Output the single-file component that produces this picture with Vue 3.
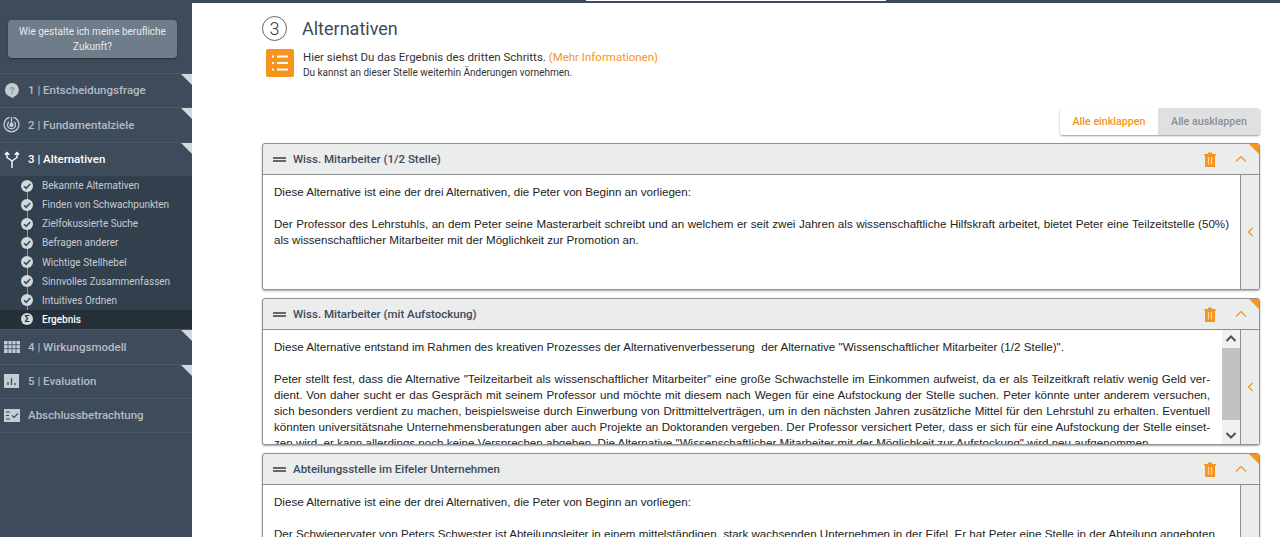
<script setup>
const steps = [
  { label: '1 | Entscheidungsfrage', icon: 'question' },
  { label: '2 | Fundamentalziele', icon: 'target' },
  { label: '3 | Alternativen', icon: 'fork', active: true },
]
const subSteps = [
  'Bekannte Alternativen',
  'Finden von Schwachpunkten',
  'Zielfokussierte Suche',
  'Befragen anderer',
  'Wichtige Stellhebel',
  'Sinnvolles Zusammenfassen',
  'Intuitives Ordnen',
]
const lowerSteps = [
  { label: '4 | Wirkungsmodell', icon: 'grid', tri: true },
  { label: '5 | Evaluation', icon: 'chart', tri: true },
  { label: 'Abschlussbetrachtung', icon: 'check', tri: false },
]
</script>

<template>
  <div class="page">
    <div class="topbar"><div class="notch"></div></div>
    <div class="layout">
      <aside class="sidebar">
        <div class="question-wrap">
          <div class="question">Wie gestalte ich meine berufliche Zukunft?</div>
        </div>
        <nav>
          <div v-for="s in steps" :key="s.label" class="step" :class="{ active: s.active }">
            <span class="step-icon">
              <svg v-if="s.icon === 'question'" width="16" height="17" viewBox="0 0 16 17">
                <path d="M8 1a7 7 0 0 0-7 7c0 3.500 2.500 6.300 6 6.900L9.500 16.500V14.800A7 7 0 0 0 8 1z" fill="#c5ccd3"/>
                <text x="8" y="11.500" text-anchor="middle" font-size="9.500" font-weight="700" font-family="Roboto" fill="#8c97a2">?</text>
              </svg>
              <svg v-if="s.icon === 'target'" width="17" height="17" viewBox="0 0 17 17" fill="none" stroke="#c5ccd3" stroke-width="1.300">
                <path d="M6.500 1.300a7.400 7.400 0 1 0 4 0"/>
                <path d="M6 5.800a4 4 0 1 0 5 0"/>
                <circle cx="8.500" cy="9" r="1.500" fill="#c5ccd3"/>
                <path d="M8.500 1v7"/>
              </svg>
              <svg v-if="s.icon === 'fork'" width="16" height="17" viewBox="0 0 16 17" fill="none" stroke="#fff" stroke-width="1.400">
                <path d="M8 17v-7L3 6.500V2M8 10l5-3.500V2"/>
                <path d="M.8 3.800L3 1.500l2.200 2.300M10.800 3.800L13 1.500l2.200 2.300"/>
              </svg>
            </span>
            <span>{{ s.label }}</span>
            <i class="tri"></i>
          </div>
        </nav>
        <ul class="subs">
          <li v-for="sub in subSteps" :key="sub" class="sub">
            <span class="dot">
              <svg width="10" height="10" viewBox="0 0 10 10" fill="none" stroke="#3d4b5a" stroke-width="1.600"><path d="M2 5.200l2.200 2.200L8.200 3"/></svg>
            </span>
            {{ sub }}
          </li>
          <li class="sub current">
            <span class="dot"><b>Σ</b></span>
            Ergebnis
          </li>
        </ul>
        <nav class="lower">
          <div v-for="s in lowerSteps" :key="s.label" class="step">
            <span class="step-icon">
              <svg v-if="s.icon === 'grid'" width="16" height="12" viewBox="0 0 16 12" fill="#c5ccd3">
                <path d="M0 0h16v12H0z"/>
                <path d="M0 3.700h16M0 7.700h16M4 0v12M8 0v12M12 0v12" stroke="#3d4b5a" stroke-width=".8"/>
              </svg>
              <svg v-if="s.icon === 'chart'" width="15" height="14" viewBox="0 0 15 14">
                <path d="M0 0h15v14H0z" fill="#c5ccd3"/>
                <path d="M4 8v3M7.500 4v7M11 9v2" stroke="#3d4b5a" stroke-width="1.300"/>
              </svg>
              <svg v-if="s.icon === 'check'" width="16" height="13" viewBox="0 0 16 13" fill="none">
                <path d="M0 0h16v13H0z" fill="#c5ccd3"/>
                <path d="M2 3h4M2 6.500h3M2 10h4" stroke="#3d4b5a" stroke-width="1"/>
                <path d="M8 6.500l2 2 4-4" stroke="#3d4b5a" stroke-width="1.200"/>
              </svg>
            </span>
            <span>{{ s.label }}</span>
            <i v-if="s.tri" class="tri"></i>
          </div>
        </nav>
      </aside>

      <main class="content">
        <header class="head">
          <span class="num">3</span>
          <h1>Alternativen</h1>
        </header>
        <div class="intro">
          <span class="intro-icon">
            <svg width="20" height="20" viewBox="0 0 20 20" fill="none" stroke="#fff" stroke-width="2">
              <path d="M7 3.500h11M7 10h11M7 16.500h11"/>
              <path d="M2 3.500h2M2 10h2M2 16.500h2"/>
            </svg>
          </span>
          <div class="intro-text">
            <p class="intro-main">Hier siehst Du das Ergebnis des dritten Schritts. <a>(Mehr Informationen)</a></p>
            <p class="intro-sub">Du kannst an dieser Stelle weiterhin Änderungen vornehmen.</p>
          </div>
        </div>

        <div class="toolbar">
          <div class="btn-group">
            <button class="on">Alle einklappen</button>
            <button class="off">Alle ausklappen</button>
          </div>
        </div>

        <section class="card">
          <div class="card-head">
            <span class="grip"></span>
            <h2>Wiss. Mitarbeiter (1/2 Stelle)</h2>
            <svg class="trash" width="12" height="15" viewBox="0 0 12 15"><path d="M0 2h4V.500h4V2h4v1.500h-1V15H1V3.500H0z" fill="#f7941d"/><path d="M4.500 5v7.500M7.500 5v7.500" stroke="#fbd9ae" stroke-width="1.200"/></svg>
            <svg class="chev" width="12" height="8" viewBox="0 0 12 8" fill="none" stroke="#f7941d" stroke-width="1.200"><path d="M1 6.500l5-5 5 5"/></svg>
          </div>
          <div class="card-body">
            <div class="text">
              <p>Diese Alternative ist eine der drei Alternativen, die Peter von Beginn an vorliegen:</p>
              <br>
              <p>Der Professor des Lehrstuhls, an dem Peter seine Masterarbeit schreibt und an welchem er seit zwei Jahren als wissenschaftliche Hilfskraft arbeitet, bietet Peter eine Teilzeitstelle (50%) als wissenschaftlicher Mitarbeiter mit der Möglichkeit zur Promotion an.</p>
            </div>
            <div class="rail"><svg width="7" height="10" viewBox="0 0 7 10" fill="none" stroke="#f7941d" stroke-width="1.200"><path d="M5.500 1L1.500 5l4 4"/></svg></div>
          </div>
        </section>

        <section class="card">
          <div class="card-head">
            <span class="grip"></span>
            <h2>Wiss. Mitarbeiter (mit Aufstockung)</h2>
            <svg class="trash" width="12" height="15" viewBox="0 0 12 15"><path d="M0 2h4V.500h4V2h4v1.500h-1V15H1V3.500H0z" fill="#f7941d"/><path d="M4.500 5v7.500M7.500 5v7.500" stroke="#fbd9ae" stroke-width="1.200"/></svg>
            <svg class="chev" width="12" height="8" viewBox="0 0 12 8" fill="none" stroke="#f7941d" stroke-width="1.200"><path d="M1 6.500l5-5 5 5"/></svg>
          </div>
          <div class="card-body">
            <div class="text narrow">
              <p>Diese Alternative entstand im Rahmen des kreativen Prozesses der Alternativenverbesserung &nbsp;der Alternative "Wissenschaftlicher Mitarbeiter (1/2 Stelle)".</p>
              <br>
              <p>Peter stellt fest, dass die Alternative "Teilzeitarbeit als wissenschaftlicher Mitarbeiter" eine große Schwachstelle im Einkommen aufweist, da er als Teilzeitkraft relativ wenig Geld ver&shy;dient. Von daher sucht er das Gespräch mit seinem Professor und möchte mit diesem nach Wegen für eine Aufstockung der Stelle suchen. Peter könnte unter anderem versuchen, sich besonders verdient zu machen, beispielsweise durch Einwerbung von Drittmittelverträgen, um in den nächsten Jahren zusätzliche Mittel für den Lehrstuhl zu erhalten. Eventuell könnten universitätsnahe Unternehmensberatungen aber auch Projekte an Doktoranden vergeben. Der Professor versichert Peter, dass er sich für eine Aufstockung der Stelle einset&shy;zen wird, er kann allerdings noch keine Versprechen abgeben. Die Alternative "Wissenschaftlicher Mitarbeiter mit der Möglichkeit zur Aufstockung" wird neu aufgenommen.</p>
            </div>
            <div class="scrollbar">
              <svg width="14" height="14" viewBox="0 0 14 14" fill="none" stroke="#505050" stroke-width="2"><path d="M2.500 9L7 4.500 11.500 9"/></svg>
              <div class="track"><div class="thumb"></div></div>
              <svg width="14" height="14" viewBox="0 0 14 14" fill="none" stroke="#505050" stroke-width="2"><path d="M2.500 5L7 9.500 11.500 5"/></svg>
            </div>
            <div class="rail"><svg width="7" height="10" viewBox="0 0 7 10" fill="none" stroke="#f7941d" stroke-width="1.200"><path d="M5.500 1L1.500 5l4 4"/></svg></div>
          </div>
        </section>

        <section class="card">
          <div class="card-head">
            <span class="grip"></span>
            <h2>Abteilungsstelle im Eifeler Unternehmen</h2>
            <svg class="trash" width="12" height="15" viewBox="0 0 12 15"><path d="M0 2h4V.500h4V2h4v1.500h-1V15H1V3.500H0z" fill="#f7941d"/><path d="M4.500 5v7.500M7.500 5v7.500" stroke="#fbd9ae" stroke-width="1.200"/></svg>
            <svg class="chev" width="12" height="8" viewBox="0 0 12 8" fill="none" stroke="#f7941d" stroke-width="1.200"><path d="M1 6.500l5-5 5 5"/></svg>
          </div>
          <div class="card-body">
            <div class="text">
              <p>Diese Alternative ist eine der drei Alternativen, die Peter von Beginn an vorliegen:</p>
              <br>
              <p>Der Schwiegervater von Peters Schwester ist Abteilungsleiter in einem mittelständigen, stark wachsenden Unternehmen in der Eifel. Er hat Peter eine Stelle in der Abteilung angeboten</p>
            </div>
            <div class="rail"></div>
          </div>
        </section>
      </main>
    </div>
  </div>
</template>

<style>
html, body { margin: 0; background: #fff; overflow: hidden; }
</style>

<style scoped>
.page {
  height: 537px;
  overflow: hidden;
  font-family: Roboto, sans-serif;
  display: flex;
  flex-direction: column;
}
.topbar {
  height: 3px;
  background: #3d4b5a;
  flex: none;
  display: flex;
  justify-content: center;
  padding-left: 192px;
}
.notch {
  width: 300px;
  height: 1px;
  background: #fff;
}
.layout { display: flex; flex: 1; min-height: 0; }

.sidebar {
  width: 192px;
  flex: none;
  background: #3d4b5a;
  padding-top: 17px;
  box-sizing: border-box;
}
.question-wrap { padding: 0 15px 14.500px 8px; }
.question {
  background: #6f7c89;
  color: #e8ebee;
  border-radius: 4px;
  box-shadow: 0 1px 2px rgba(0, 0, 0, .4);
  font-size: 10px;
  line-height: 15px;
  text-align: center;
  padding: 4px 6px;
}
.step {
  position: relative;
  height: 34.500px;
  display: flex;
  align-items: center;
  font-size: 11.500px;
  font-weight: 500;
  color: #b4bcc5;
  border-top: 1px solid #46586a;
  box-sizing: border-box;
}
.lower .step:last-child { border-bottom: 1px solid #46586a; }
.step.active { color: #fff; }
.step-icon {
  width: 23px;
  margin-right: 5px;
  flex: none;
  display: flex;
  justify-content: center;
}
.tri {
  position: absolute;
  top: 0;
  right: 0;
  border-style: solid;
  border-width: 0 11px 11px 0;
  border-color: transparent #d3d8dc transparent transparent;
}
.subs {
  list-style: none;
  margin: 0;
  padding: 0;
  background: #32404e;
}
.sub {
  height: 19.125px;
  display: flex;
  align-items: center;
  font-size: 10px;
  color: #c5ccd3;
  padding-left: 21px;
  gap: 9px;
  position: relative;
}
.sub:not(:last-child)::before {
  content: "";
  position: absolute;
  left: 26.500px;
  top: 14px;
  width: 1px;
  height: 10px;
  background: #8b96a1;
}
.dot {
  width: 12px;
  height: 12px;
  border-radius: 50%;
  background: #d3d8dc;
  display: flex;
  align-items: center;
  justify-content: center;
  position: relative;
  z-index: 1;
}
.dot b { font-size: 9px; color: #28333e; }
.sub.current {
  background: #25303a;
  color: #fff;
  font-weight: 500;
}

.content {
  flex: 1;
  min-width: 0;
  padding: 0 20px 0 70px;
  color: #3d4b5a;
}
.head {
  display: flex;
  align-items: center;
  height: 46px;
  padding-top: 4px;
  box-sizing: border-box;
}
.num {
  width: 23px;
  height: 23px;
  border: 1px solid #666;
  border-radius: 50%;
  display: flex;
  align-items: center;
  justify-content: center;
  font-size: 18px;
  font-weight: 300;
  color: #333;
  margin-right: 15px;
}
h1 {
  margin: 0;
  font-size: 18px;
  font-weight: 400;
  color: #3d4b5a;
}
.intro {
  display: flex;
  gap: 9px;
  margin-left: 4px;
  align-items: flex-start;
}
.intro-icon {
  width: 28px;
  height: 28px;
  background: #f7941d;
  border-radius: 2px;
  display: flex;
  align-items: center;
  justify-content: center;
}
.intro-text { padding-top: 1px; }
.intro-main {
  margin: 0;
  font-size: 11.500px;
  line-height: 15px;
  color: #333;
}
.intro-main a { color: #f7941d; }
.intro-sub {
  margin: 0;
  font-size: 10px;
  line-height: 15px;
  color: #333;
}
.toolbar {
  display: flex;
  justify-content: flex-end;
  margin: 28px 0 8px;
}
.btn-group {
  display: flex;
  border-radius: 3px;
  box-shadow: 0 1px 2px rgba(0, 0, 0, .4);
  overflow: hidden;
}
.btn-group button {
  border: 0;
  height: 27px;
  font-family: inherit;
  font-size: 10.700px;
  font-weight: 500;
  padding: 0;
}
.btn-group .on { background: #fff; color: #f7941d; width: 98px; }
.btn-group .off { background: #dfe0e1; color: #8a8f94; width: 102px; }

.card {
  position: relative;
  background: #ebecec;
  border: 1px solid #8f9193;
  border-radius: 3px;
  box-shadow: 0 1px 2px rgba(0, 0, 0, .35);
  margin-bottom: 8px;
  overflow: hidden;
}
.card::after {
  content: "";
  position: absolute;
  top: 0;
  right: 0;
  border-style: solid;
  border-width: 0 10px 10px 0;
  border-color: transparent #f7941d transparent transparent;
}
.card-head {
  height: 30px;
  display: flex;
  align-items: center;
  border-bottom: 1px solid #8d8f91;
  padding: 0 12px 0 10px;
}
.grip {
  width: 13px;
  border-top: 2px solid #666;
  border-bottom: 2px solid #666;
  height: 1px;
  margin-right: 7px;
}
h2 {
  margin: 0;
  font-size: 11.500px;
  font-weight: 500;
  color: #3d4b5a;
  flex: 1;
}
.trash { margin-right: 19px; }
.card-body {
  display: flex;
  height: 114px;
  background: #fff;
}
.text {
  flex: 1;
  min-width: 0;
  padding: 9px 11px 0 11px;
  font-family: "Liberation Sans", Arial, sans-serif;
  font-size: 11.600px;
  line-height: 16px;
  color: #222;
  text-align: justify;
  hyphens: manual;
  overflow: hidden;
}
.text p { margin: 0; }
.text.narrow { padding-right: 12px; }
.scrollbar {
  width: 18px;
  flex: none;
  background: #f1f1f1;
  display: flex;
  flex-direction: column;
  align-items: center;
}
.scrollbar svg { flex: none; height: 18px; }
.track { flex: 1; width: 100%; }
.thumb { height: 72px; background: #c1c1c1; }
.rail {
  width: 19px;
  flex: none;
  background: #ebecec;
  border-left: 1px solid #8d8f91;
  display: flex;
  align-items: center;
  justify-content: center;
  box-sizing: border-box;
}
</style>
